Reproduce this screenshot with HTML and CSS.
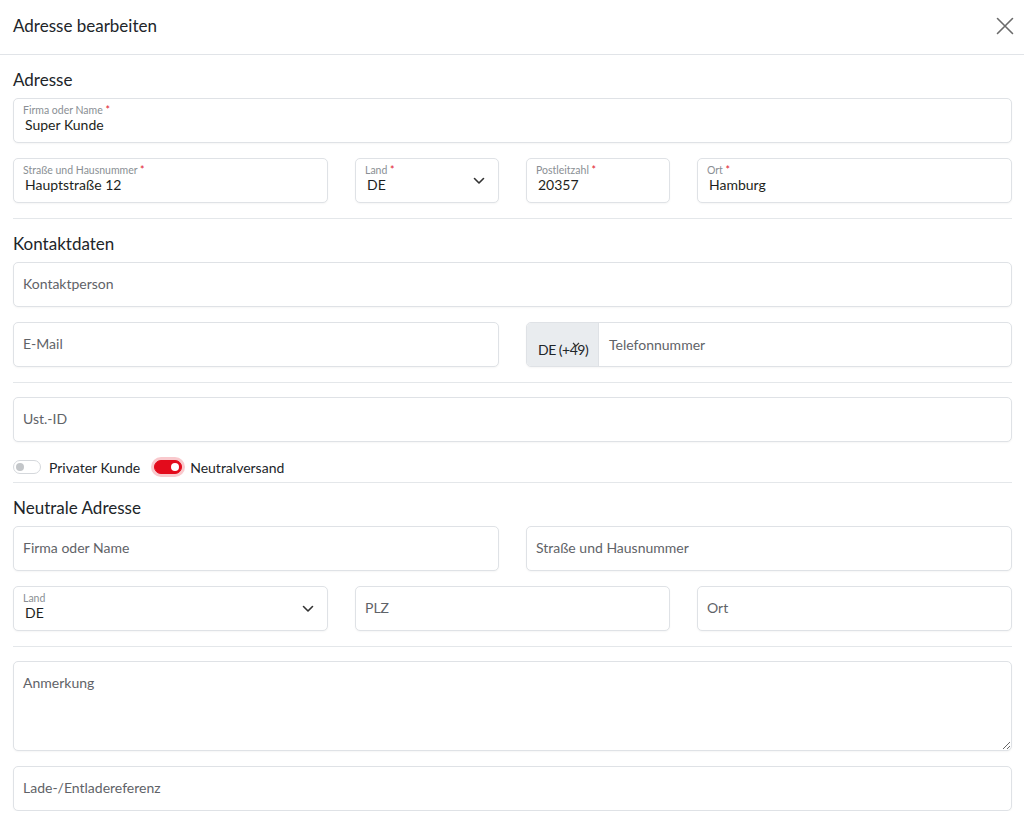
FILE: index.html
```html
<!DOCTYPE html>
<html lang="de">
<head>
<meta charset="utf-8">
<title>Adresse bearbeiten</title>
<link rel="stylesheet" href="styles.css">
</head>
<body>
<div class="modal">
  <header class="modal-header">
    <h1 class="modal-title">Adresse bearbeiten</h1>
    <button class="close" aria-label="Schließen">
      <svg width="18" height="18" viewBox="0 0 18 18"><path d="M1.5 1.5L16.5 16.5M16.5 1.5L1.5 16.5" stroke="#6b6b6b" stroke-width="1.6" stroke-linecap="round" fill="none"/></svg>
    </button>
  </header>
  <div class="modal-body">
    <h2 class="section-title first">Adresse</h2>
    <div class="grid">
      <div class="field span-12 filled"><span class="flabel">Firma oder Name <i>*</i></span><span class="fvalue">Super Kunde</span></div>
      <div class="field span-4 filled"><span class="flabel">Straße und Hausnummer <i>*</i></span><span class="fvalue">Hauptstraße 12</span></div>
      <div class="field span-2 filled select"><span class="flabel">Land <i>*</i></span><span class="fvalue">DE</span>
        <svg class="chev" width="12" height="8" viewBox="0 0 12 8"><path d="M1.5 1.5L6 6L10.5 1.5" stroke="#333" stroke-width="1.6" fill="none" stroke-linecap="round" stroke-linejoin="round"/></svg></div>
      <div class="field span-2 filled"><span class="flabel">Postleitzahl <i>*</i></span><span class="fvalue">20357</span></div>
      <div class="field span-4 filled"><span class="flabel">Ort <i>*</i></span><span class="fvalue">Hamburg</span></div>
    </div>
    <hr class="divider">
    <h2 class="section-title">Kontaktdaten</h2>
    <div class="grid">
      <div class="field span-12"><span class="ph">Kontaktperson</span></div>
      <div class="field span-6"><span class="ph">E-Mail</span></div>
      <div class="field span-6 group">
        <div class="addon">DE (+49)<svg class="addon-chev" width="8" height="5" viewBox="0 0 8 5"><path d="M1 1L4 4L7 1" stroke="#333" stroke-width="1.2" fill="none"/></svg></div>
        <span class="ph">Telefonnummer</span>
      </div>
    </div>
    <hr class="divider">
    <div class="grid">
      <div class="field span-12"><span class="ph">Ust.-ID</span></div>
    </div>
    <div class="switches">
      <label class="switch"><span class="track"></span>Privater Kunde</label>
      <label class="switch on"><span class="track"></span>Neutralversand</label>
    </div>
    <hr class="divider tight">
    <h2 class="section-title">Neutrale Adresse</h2>
    <div class="grid">
      <div class="field span-6"><span class="ph">Firma oder Name</span></div>
      <div class="field span-6"><span class="ph">Straße und Hausnummer</span></div>
      <div class="field span-4 filled select"><span class="flabel">Land</span><span class="fvalue">DE</span>
        <svg class="chev" width="12" height="8" viewBox="0 0 12 8"><path d="M1.5 1.5L6 6L10.5 1.5" stroke="#333" stroke-width="1.6" fill="none" stroke-linecap="round" stroke-linejoin="round"/></svg></div>
      <div class="field span-4"><span class="ph">PLZ</span></div>
      <div class="field span-4"><span class="ph">Ort</span></div>
    </div>
    <hr class="divider">
    <div class="grid">
      <textarea class="area span-12" placeholder="Anmerkung"></textarea>
      <div class="field span-12"><span class="ph">Lade-/Entladereferenz</span></div>
    </div>
  </div>
</div>
</body>
</html>
```
FILE: styles.css
```css
* { box-sizing: border-box; }
html, body { margin: 0; padding: 0; background: #fff; }
body {
  font-family: "Lato", "Open Sans", "Noto Sans", sans-serif;
  color: #212529;
  font-size: 14px;
}
.modal { width: 1024px; }
.modal-header {
  height: 55px;
  display: flex;
  align-items: center;
  justify-content: space-between;
  padding: 0 10px 0 13px;
  border-bottom: 1px solid #e1e4e8;
}
.modal-title {
  margin: 0 0 2px;
  font-size: 17px;
  font-weight: 400;
  color: #212529;
  line-height: 22px;
}
.close {
  border: 0;
  background: none;
  padding: 0;
  width: 18px;
  height: 18px;
  display: flex;
  margin-bottom: 2px;
  cursor: pointer;
}
.modal-body { padding: 0 12px 0 13px; }
.section-title {
  margin: 0 0 7px;
  font-size: 17px;
  line-height: 22px;
  font-weight: 400;
  color: #212529;
}
.section-title.first { margin-top: 14px; }
.grid {
  display: grid;
  grid-template-columns: repeat(12, 1fr);
  column-gap: 27px;
  row-gap: 15px;
}
.span-12 { grid-column: span 12; }
.span-6 { grid-column: span 6; }
.span-4 { grid-column: span 4; }
.span-2 { grid-column: span 2; }
.field {
  position: relative;
  height: 45px;
  border: 1px solid #dfe2e6;
  border-radius: 5px;
  box-shadow: 0 1px 2px rgba(0,0,0,0.04);
  background: #fff;
  display: flex;
  align-items: center;
  padding: 0 9px 2px;
}
.field.filled {
  flex-direction: column;
  align-items: flex-start;
  justify-content: flex-start;
  padding: 5px 9px 0;
}
.flabel {
  font-size: 10.5px;
  line-height: 12px;
  color: #8a8f94;
}
.flabel i { font-style: normal; color: #e2202f; }
.fvalue {
  font-size: 14px;
  line-height: 18px;
  margin-top: 0;
  padding-left: 2px;
  color: #1d1f21;
}
.ph { color: #5f6368; font-size: 14px; }
.chev { position: absolute; right: 13px; top: 18px; }
.field.group { padding: 0; overflow: hidden; }
.addon {
  position: relative;
  width: 72px;
  height: 100%;
  background: #e9ecef;
  border-right: 1px solid #dfe2e6;
  display: flex;
  align-items: center;
  padding: 9px 0 0 11px;
  font-size: 14px;
  letter-spacing: -0.5px;
  color: #212529;
  margin-right: 10px;
}
.addon-chev { position: absolute; left: 45px; top: 19px; }
.divider {
  border: 0;
  border-top: 1px solid #e4e7ea;
  margin: 15px 0 14px;
  height: 0;
}
.switches {
  display: flex;
  align-items: center;
  gap: 14px;
  margin-top: 15px;
  height: 20px;
}
.switch {
  display: flex;
  align-items: center;
  gap: 8px;
  font-size: 14px;
  color: #212529;
}
.track {
  position: relative;
  width: 28px;
  height: 14px;
  border: 1px solid #d5d8dc;
  border-radius: 7px;
  background: #fff;
}
.track::after {
  content: "";
  position: absolute;
  left: 2px;
  top: 2px;
  width: 8px;
  height: 8px;
  border-radius: 50%;
  background: #c3c6c9;
}
.switch.on .track {
  background: #e30b1c;
  border-color: #e30b1c;
  box-shadow: 0 0 0 3px rgba(227, 11, 28, 0.22);
}
.switch.on .track::after {
  left: auto;
  right: 2px;
  background: #fff;
}
.divider.tight { margin-top: 5px; }
.area {
  height: 90px;
  border: 1px solid #dfe2e6;
  border-radius: 5px;
  box-shadow: 0 1px 2px rgba(0,0,0,0.04);
  font-family: inherit;
  font-size: 14px;
  padding: 12px 9px;
  color: #212529;
  resize: vertical;
  margin: 0;
  display: block;
  width: 100%;
}
.area::placeholder { color: #5f6368; opacity: 1; }
```
